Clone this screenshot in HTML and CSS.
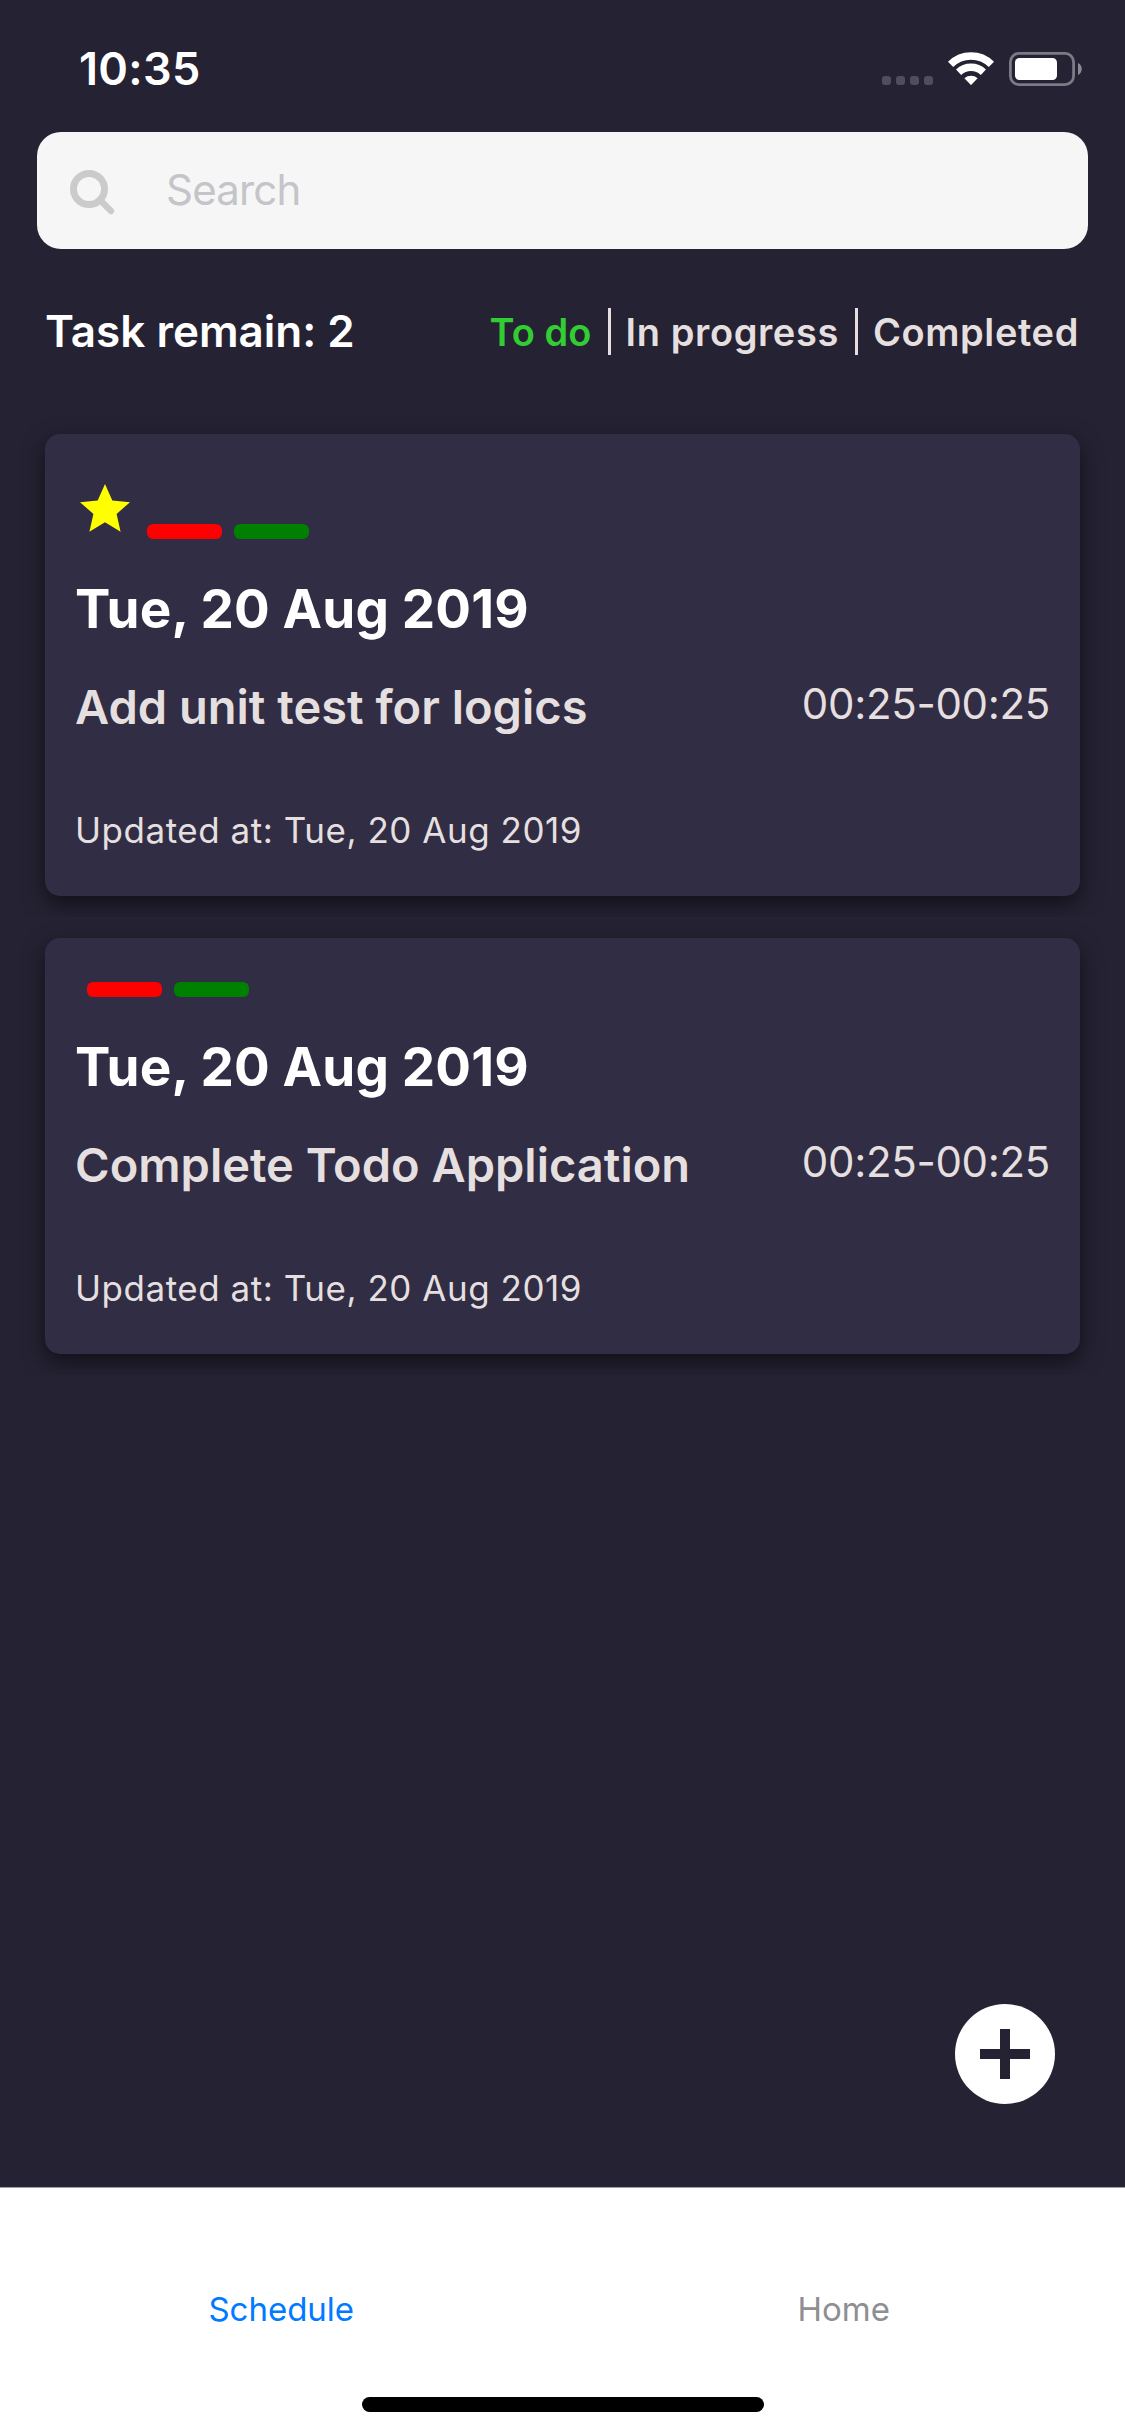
FILE: index.html
```html
<!DOCTYPE html>
<html lang="en">
<head>
<meta charset="utf-8">
<title>Schedule</title>
<link rel="stylesheet" href="styles.css">
</head>
<body>
<div class="app">
  <header class="status-bar">
    <span class="clock">10:35</span>
    <svg class="status-icons" width="202" height="36" viewBox="881 51 202 36" aria-hidden="true">
      <g fill="#514e5c">
        <rect x="882" y="76" width="9" height="9" rx="3"/>
        <rect x="896" y="76" width="9" height="9" rx="3"/>
        <rect x="910" y="76" width="9" height="9" rx="3"/>
        <rect x="924" y="76" width="9" height="9" rx="3"/>
      </g>
      <g fill="none" stroke="#fff" stroke-width="7.4">
        <path d="M950.6 64.4A29 29 0 0 1 991.4 64.4"/>
        <path d="M958.6 72.2A18 18 0 0 1 983.4 72.2"/>
      </g>
      <path d="M964.4 78.3A10 10 0 0 1 977.6 78.3L971.6 84.6Q971 85.2 970.4 84.6Z" fill="#fff"/>
      <rect x="1010.4" y="53.4" width="63.2" height="31.2" rx="8.5" fill="none" stroke="#7c7a85" stroke-width="2.8"/>
      <rect x="1015" y="58" width="42" height="22" rx="4.5" fill="#fff"/>
      <path d="M1078 63C1083 65 1083 73 1078 75Z" fill="#8b8993"/>
    </svg>
  </header>

  <div class="search">
    <svg class="search-icon" width="48" height="48" viewBox="0 0 48 48" fill="none" stroke="#cbcbcb" aria-hidden="true">
      <circle cx="20" cy="20" r="15.5" stroke-width="7"/>
      <path d="M31 31L42 42" stroke-width="6.4" stroke-linecap="round"/>
    </svg>
    <span class="placeholder">Search</span>
  </div>

  <div class="summary">
    <span class="remain">Task remain: 2</span>
    <div class="filters">
      <span class="filter active">To do</span>
      <span class="filter">In progress</span>
      <span class="filter">Completed</span>
    </div>
  </div>

  <main class="list">
    <div class="row">
      <article class="card">
        <div class="tags">
          <svg class="star" width="60" height="61" viewBox="0 0 60 61" aria-hidden="true">
            <path d="M30 6L37.3 22.6L55 24.2L41.6 35.9L45.6 53.7L30 44.2L14.4 53.7L18.4 35.9L5 24.2L22.7 22.6Z" fill="#ff0"/>
          </svg>
          <span class="tag red"></span>
          <span class="tag green"></span>
        </div>
        <h2 class="date">Tue, 20 Aug 2019</h2>
        <div class="task">
          <span class="title">Add unit test for logics</span>
          <span class="time">00:25-00:25</span>
        </div>
        <p class="updated">Updated at: Tue, 20 Aug 2019</p>
      </article>
    </div>
    <div class="row">
      <article class="card">
        <div class="tags">
          <span class="tag red"></span>
          <span class="tag green"></span>
        </div>
        <h2 class="date">Tue, 20 Aug 2019</h2>
        <div class="task">
          <span class="title">Complete Todo Application</span>
          <span class="time">00:25-00:25</span>
        </div>
        <p class="updated">Updated at: Tue, 20 Aug 2019</p>
      </article>
    </div>
  </main>

  <button class="fab" aria-label="Add task">
    <svg width="50" height="50" viewBox="0 0 50 50"><path d="M20 0h10v20h20v10H30v20H20V30H0V20h20z" fill="#252233"/></svg>
  </button>

  <nav class="tab-bar">
    <div class="tabs">
      <a class="tab current">Schedule</a>
      <a class="tab">Home</a>
    </div>
    <div class="home-indicator"></div>
  </nav>
</div>
</body>
</html>
```
FILE: styles.css
```css
* {
  box-sizing: border-box;
  margin: 0;
  padding: 0;
}

body {
  background: #252233;
  font-family: Inter, "Liberation Sans", sans-serif;
}

.app {
  position: relative;
  display: flex;
  flex-direction: column;
  width: 1125px;
  height: 2436px;
  overflow: hidden;
  background: #252233;
}

.status-bar {
  display: flex;
  justify-content: space-between;
  align-items: flex-start;
  height: 132px;
  padding: 42px 42px 0 79px;
}

.clock {
  color: #fff;
  font-size: 45px;
  font-weight: 600;
  line-height: 54px;
  letter-spacing: 0.3px;
}

.status-icons {
  margin-top: 9px;
}

.search {
  display: flex;
  align-items: center;
  height: 117px;
  margin: 0 37px;
  padding: 0 32px 2px;
  border-radius: 24px;
  background: #f6f6f6;
}

.search-icon {
  margin-top: 7px;
}

.placeholder {
  margin-left: 49px;
  color: #c4c4c9;
  font-size: 42px;
  letter-spacing: -0.8px;
}

.summary {
  display: flex;
  justify-content: space-between;
  align-items: flex-start;
  height: 47px;
  margin: 59px 46px 0 45px;
}

.remain {
  color: #fff;
  font-size: 44px;
  font-weight: 600;
  line-height: 46px;
}

.filters {
  display: flex;
  height: 47px;
}

.filter {
  color: #e5dfdf;
  font-size: 38px;
  font-weight: 600;
  line-height: 48px;
  letter-spacing: 0.6px;
}

.filter + .filter {
  margin-left: 16px;
  padding-left: 15px;
  border-left: 3px solid #e5dfdf;
}

.filter.active {
  color: #32cd32;
  letter-spacing: 0.1px;
}

.list {
  flex: 1;
  padding-top: 58px;
}

/* Each row clips the lower edge of its card's shadow. */
.row {
  padding: 21px 45px;
  overflow: hidden;
}

.card {
  padding: 44px 30px 45px;
  border-radius: 15px;
  background: #302d45;
  box-shadow: 0 8px 22px rgba(0, 0, 0, 0.54);
}

.tags {
  display: flex;
  align-items: flex-end;
}

.tag {
  width: 75px;
  height: 15px;
  margin-left: 12px;
  border-radius: 6px;
}

.red {
  background: #f00;
}

.green {
  background: #008000;
}

.date {
  margin: 38px 0 0;
  color: #fff;
  font-size: 53px;
  font-weight: 700;
  line-height: 64px;
  letter-spacing: 0.15px;
}

.task {
  display: flex;
  justify-content: space-between;
  align-items: flex-start;
  margin-top: 38px;
}

.title {
  color: #e5dfdf;
  font-size: 47px;
  font-weight: 600;
  line-height: 56px;
}

.time {
  color: #e5dfdf;
  font-size: 42px;
  line-height: 49px;
  letter-spacing: -0.33px;
}

.updated {
  margin-top: 74px;
  color: #e5dfdf;
  font-size: 35px;
  line-height: 42px;
  letter-spacing: 0.53px;
}

.fab {
  position: absolute;
  right: 70px;
  bottom: 332px;
  display: flex;
  align-items: center;
  justify-content: center;
  width: 100px;
  height: 100px;
  border: 0;
  border-radius: 50%;
  background: #fff;
}

.tab-bar {
  height: 249px;
  border-top: 1px solid #a09fa6;
  background: #fff;
}

.tabs {
  display: flex;
  padding-top: 101px;
}

.tab {
  flex: 1;
  color: #8e8e93;
  font-size: 33px;
  line-height: 40px;
  text-align: center;
}

.tab.current {
  color: #007aff;
}

.home-indicator {
  width: 402px;
  height: 15px;
  margin: 68px auto 0;
  border-radius: 7.5px;
  background: #000;
}
```
